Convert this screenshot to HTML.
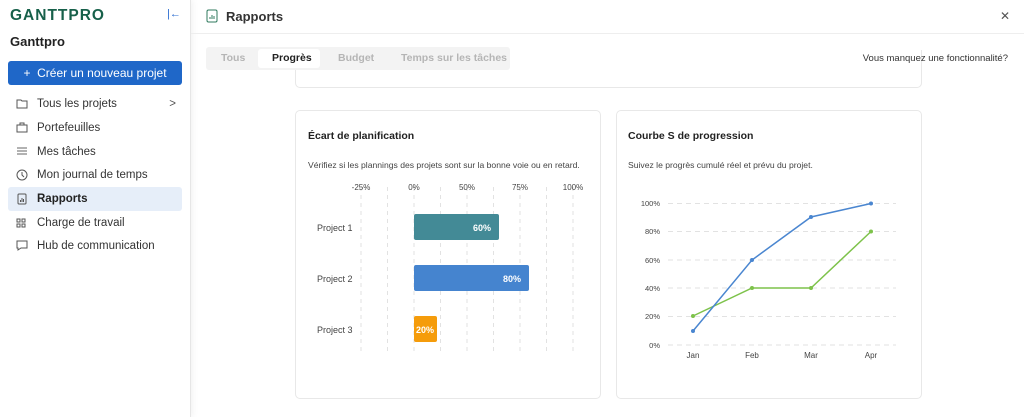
<!DOCTYPE html>
<html><head><meta charset="utf-8"><style>
*{box-sizing:border-box;margin:0;padding:0}
body{width:1024px;height:417px;overflow:hidden;font-family:"Liberation Sans",sans-serif;background:#fff;position:relative;color:#222}
.side{position:absolute;left:0;top:0;width:191px;height:417px;background:#fff;border-right:1px solid #e6e6e6;box-shadow:2px 0 6px rgba(0,0,0,.05)}
.logo{position:absolute;left:10px;top:7px;font-size:15.5px;font-weight:bold;color:#17604a;letter-spacing:1px}
.coll{position:absolute;left:167px;top:8px;font-size:11px;color:#2a6cd0}
.ws{position:absolute;left:10px;top:34px;font-size:13px;font-weight:bold}
.btn{position:absolute;left:8px;top:61px;width:174px;height:24px;background:#1f67c8;border-radius:3px;color:#fff;font-size:12px;text-align:center;line-height:24px;white-space:nowrap}
.nav{position:absolute;left:8px;width:174px;height:24px;font-size:11.5px;line-height:24px;padding-left:29px;color:#333;border-radius:3px;white-space:nowrap}
.nav svg{position:absolute;left:8px;top:6px}
.nav.act{background:#e6eef9;font-weight:bold;color:#222}
.hdr{position:absolute;left:191px;top:0;right:0;height:34px;border-bottom:1px solid #eee}
.hdr .t{position:absolute;left:35px;top:9px;font-size:13px;font-weight:bold;color:#333}
.x{position:absolute;right:14px;top:9px;font-size:12px;color:#555}
.tabs{position:absolute;left:206px;top:47px;width:304px;height:23px;background:#f3f3f3;border-radius:3px;font-size:10.5px;white-space:nowrap}
.tabs span{position:absolute;top:5px;color:#b5b5b5;font-weight:bold}
.tabs .on{position:absolute;left:52px;top:2px;width:62px;height:19px;background:#fff;border-radius:3px}
.miss{position:absolute;right:16px;top:53px;font-size:9.5px;color:#333;white-space:nowrap}
.card{position:absolute;border:1px solid #e8e8e8;border-radius:5px;background:#fff}
.ct{position:absolute;font-size:10.5px;font-weight:bold;color:#222;white-space:nowrap}
.cs{position:absolute;font-size:8.6px;color:#444;white-space:nowrap}
svg text{font-family:"Liberation Sans",sans-serif}
</style></head><body>
<div class="side">
<div class="logo">GANTTPRO</div>
<div class="coll">|←</div>
<div class="ws">Ganttpro</div>
<div class="btn">+&nbsp; Créer un nouveau projet</div>
<div class="nav" style="top:92px"><svg width="12" height="11"><path d="M1 2h4l1 1h5v7H1z" fill="none" stroke="#555"/></svg>Tous les projets<span style="position:absolute;right:6px;color:#555">&gt;</span></div>
<div class="nav" style="top:116px"><svg width="12" height="11"><rect x="1" y="3" width="10" height="7" fill="none" stroke="#555"/><path d="M4 3V1h4v2" fill="none" stroke="#555"/></svg>Portefeuilles</div>
<div class="nav" style="top:140px"><svg width="12" height="11"><path d="M1 2h10M1 5h10M1 8h10" stroke="#666"/></svg>Mes tâches</div>
<div class="nav" style="top:163px"><svg width="12" height="12"><circle cx="6" cy="6" r="5" fill="none" stroke="#555"/><path d="M6 3v3l2 2" fill="none" stroke="#555"/></svg>Mon journal de temps</div>
<div class="nav act" style="top:187px"><svg width="12" height="12"><rect x="2" y="1" width="8" height="10" rx="1" fill="none" stroke="#555"/><path d="M4.5 9V7M6 9V5M7.5 9V6" stroke="#555"/></svg>Rapports</div>
<div class="nav" style="top:211px"><svg width="12" height="12"><rect x="1" y="2" width="3" height="3" fill="none" stroke="#555"/><rect x="6" y="2" width="3" height="3" fill="none" stroke="#555"/><rect x="1" y="7" width="3" height="3" fill="none" stroke="#555"/><rect x="6" y="7" width="3" height="3" fill="none" stroke="#555"/></svg>Charge de travail</div>
<div class="nav" style="top:234px"><svg width="12" height="12"><path d="M1 1h10v7H5l-3 2V8H1z" fill="none" stroke="#555"/></svg>Hub de communication</div>
</div>
<div class="hdr"><svg style="position:absolute;left:15px;top:9px" width="12" height="14"><rect x="1" y="1" width="10" height="12" rx="1.5" fill="none" stroke="#2f7a5e"/><path d="M4 10V8M6 10V6M8 10V7" stroke="#2f7a5e"/></svg><div class="t">Rapports</div><div class="x">✕</div></div>
<div class="card" style="left:295px;top:50px;width:627px;height:38px;border-top:none;border-radius:0 0 5px 5px"></div>
<div class="tabs"><div class="on"></div><span style="left:15px">Tous</span><span style="left:66px;color:#222">Progrès</span><span style="left:132px">Budget</span><span style="left:195px">Temps sur les tâches</span></div>
<div class="miss">Vous manquez une fonctionnalité?</div>

<div class="card" style="left:295px;top:110px;width:306px;height:289px"></div>
<div class="ct" style="left:308px;top:130px">Écart de planification</div>
<div class="cs" style="left:308px;top:160px">Vérifiez si les plannings des projets sont sur la bonne voie ou en retard.</div>
<svg style="position:absolute;left:295px;top:175px" width="306" height="180">
<g stroke="#e2e2e2" stroke-dasharray="4,4">
<path d="M66 12v168M92.5 12v168M119 12v168M145.5 12v168M172 12v168M198.5 12v168M225 12v168M251.5 12v168M278 12v168"/></g>
<g font-size="8" fill="#444" text-anchor="middle"><text x="66" y="15">-25%</text><text x="119" y="15">0%</text><text x="172" y="15">50%</text><text x="225" y="15">75%</text><text x="278" y="15">100%</text></g>
<g font-size="9" fill="#444"><text x="22" y="56">Project 1</text><text x="22" y="107">Project 2</text><text x="22" y="158">Project 3</text></g>
<rect x="119" y="39" width="85" height="26" rx="2" fill="#438a96"/>
<rect x="119" y="90" width="115" height="26" rx="2" fill="#4584cf"/>
<rect x="119" y="141" width="23" height="26" rx="2" fill="#f59c0b"/>
<g font-size="9" fill="#fff" font-weight="bold"><text x="178" y="56">60%</text><text x="208" y="107">80%</text><text x="121" y="158">20%</text></g>
</svg>

<div class="card" style="left:616px;top:110px;width:306px;height:289px"></div>
<div class="ct" style="left:628px;top:130px">Courbe S de progression</div>
<div class="cs" style="left:628px;top:160px">Suivez le progrès cumulé réel et prévu du projet.</div>
<svg style="position:absolute;left:616px;top:190px" width="306" height="180">
<g stroke="#e2e2e2" stroke-dasharray="5,4"><path d="M52 13.5h228M52 41.5h228M52 70h228M52 98h228M52 126.5h228M52 155h228"/></g>
<g font-size="7.5" fill="#444" text-anchor="end"><text x="44" y="16">100%</text><text x="44" y="44">80%</text><text x="44" y="73">60%</text><text x="44" y="101">40%</text><text x="44" y="129">20%</text><text x="44" y="158">0%</text></g>
<g font-size="8" fill="#444" text-anchor="middle"><text x="77" y="168">Jan</text><text x="136" y="168">Feb</text><text x="195" y="168">Mar</text><text x="255" y="168">Apr</text></g>
<polyline points="77,126 136,98 195,98 255,41.5" fill="none" stroke="#7dc24a" stroke-width="1.5"/>
<polyline points="77,141 136,70 195,27 255,13.5" fill="none" stroke="#4a86d0" stroke-width="1.5"/>
<g fill="#7dc24a"><circle cx="77" cy="126" r="2"/><circle cx="136" cy="98" r="2"/><circle cx="195" cy="98" r="2"/><circle cx="255" cy="41.5" r="2"/></g>
<g fill="#4a86d0"><circle cx="77" cy="141" r="2"/><circle cx="136" cy="70" r="2"/><circle cx="195" cy="27" r="2"/><circle cx="255" cy="13.5" r="2"/></g>
</svg>
</body></html>
